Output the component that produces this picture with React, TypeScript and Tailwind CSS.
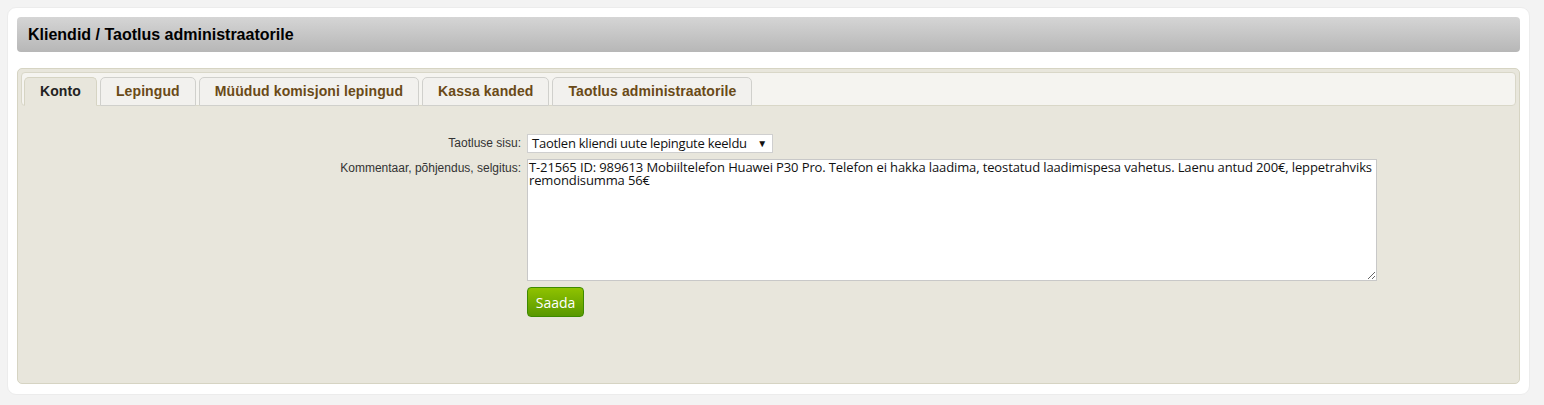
import React from "react";

const tabs = [
  { label: "Konto", active: true },
  { label: "Lepingud" },
  { label: "Müüdud komisjoni lepingud" },
  { label: "Kassa kanded" },
  { label: "Taotlus administraatorile" },
];

export default function App() {
  return (
    <div className="min-h-[405px] bg-[#f3f3f3] pl-[7px] pr-[14px] pt-[7px]" style={{ fontFamily: '"Liberation Sans", Arial, sans-serif' }}>
      <div className="rounded-[9px] border border-[#ececec] bg-white p-[9px] pb-[10px]">
        <div className="flex h-[35px] items-center rounded-[4px] bg-gradient-to-b from-[#d5d5d5] to-[#b7b7b7] px-[11px]">
          <h1 className="text-[16px] font-bold text-black">Kliendid / Taotlus administraatorile</h1>
        </div>
        <div className="mt-[16px] h-[316px] rounded-[5px] border border-[#d6d4c3] bg-[#e8e6dc] p-[3px]">
          <div className="flex h-[34px] items-end gap-[3px] rounded-[4px] border border-[#d9d7c8] bg-[#f5f4f0] px-[2px]">
            {tabs.map((t) => (
              <div
                key={t.label}
                className={
                  "-mb-px flex h-[29px] items-center whitespace-nowrap rounded-t-[5px] border px-[15px] text-[14px] font-bold tracking-[0.1px] " +
                  (t.active
                    ? "border-[#d6d4c3] border-b-[#e8e6dc] bg-[#e8e6dc] text-[#222]"
                    : "border-[#d0d0cc] bg-[#f2f1ee] text-[#6a4a17]")
                }
              >
                {t.label}
              </div>
            ))}
          </div>
          <div className="mt-[28px] grid grid-cols-[500px_1fr] gap-x-[6px] gap-y-[6px]">
            <label className="pt-[2px] text-right text-[12px] leading-[14px] text-[#333]">Taotluse sisu:</label>
            <div>
              <div
                className="flex h-[19px] w-[246px] items-center justify-between whitespace-nowrap border border-[#cfcfcf] bg-white pl-[4px] pr-[5px] text-[13px] leading-[17px] tracking-[-0.25px] text-[#111]"
                style={{ fontFamily: '"Open Sans", sans-serif' }}
              >
                <span>Taotlen kliendi uute lepingute keeldu</span>
                <span className="text-[10px]">▼</span>
              </div>
            </div>
            <label className="pt-[2px] text-right text-[12px] leading-[14px] text-[#333]">Kommentaar, põhjendus, selgitus:</label>
            <div className="flex flex-col gap-[6px]">
              <textarea
                spellCheck={false}
                className="block h-[122px] w-[850px] resize border border-[#c8c8c8] bg-white px-px pt-[1px] text-[13px] leading-[13px] tracking-[-0.12px] text-[#111] outline-none"
                style={{ fontFamily: '"Open Sans", sans-serif' }}
                defaultValue="T-21565 ID: 989613 Mobiiltelefon Huawei P30 Pro. Telefon ei hakka laadima, teostatud laadimispesa vahetus. Laenu antud 200€, leppetrahviks remondisumma 56€"
              />
              <div>
                <button
                  className="h-[30px] w-[57px] rounded-[4px] border border-[#3d8a00] bg-gradient-to-b from-[#8fc200] to-[#589800] text-[14px] text-white"
                  style={{ fontFamily: '"Open Sans", sans-serif' }}
                >
                  Saada
                </button>
              </div>
            </div>
          </div>
        </div>
      </div>
    </div>
  );
}
